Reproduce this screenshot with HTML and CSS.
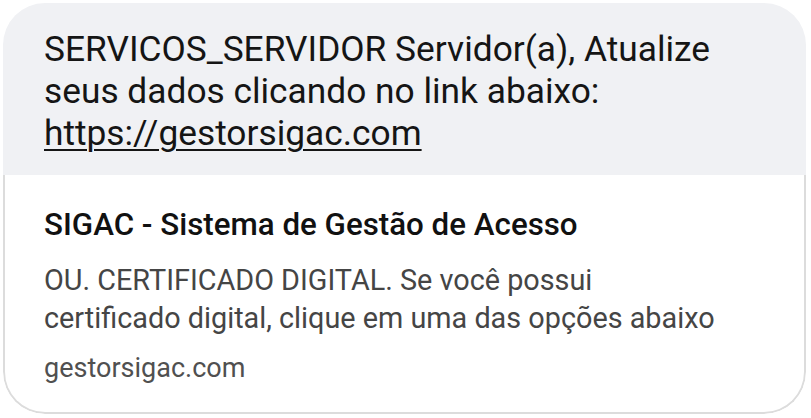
FILE: index.html
```html
<!DOCTYPE html>
<html lang="pt">
<head>
<meta charset="utf-8">
<link rel="stylesheet" href="styles.css">
</head>
<body>
<div class="card">
  <div class="message">
    <p>SERVICOS_SERVIDOR Servidor(a), Atualize seus dados clicando no link abaixo: <a href="#">https://gestorsigac.com</a></p>
  </div>
  <div class="preview">
    <div class="title">SIGAC - Sistema de Gestão de Acesso</div>
    <div class="desc">OU. CERTIFICADO DIGITAL. Se você possui certificado digital, clique em uma das opções abaixo</div>
    <div class="domain">gestorsigac.com</div>
  </div>
</div>
</body>
</html>
```
FILE: styles.css
```css
html, body { margin: 0; padding: 0; background: #fff; }
body { padding: 3px 5px 4px 3px; font-family: Roboto, "Noto Sans", sans-serif; }
.card {
  width: 803px;
  height: 411px;
  box-sizing: border-box;
  border-radius: 42px;
  overflow: hidden;
  display: flex;
  flex-direction: column;
  background: #fff;
}
.message {
  background: #f0f1f4;
  height: 172px;
  box-sizing: border-box;
  padding: 25px 30px 0 41px;
}
.message p {
  margin: 0;
  font-size: 35.3px;
  line-height: 42px;
  color: #151515;
  width: 720px;
}
.message a { color: #151515; text-decoration: underline; text-underline-offset: 4px; text-decoration-thickness: 2px; }
.preview {
  flex: 1;
  border: 2px solid #dcdcdc;
  border-top: none;
  border-radius: 0 0 42px 42px;
  padding: 33px 30px 0 39px;
}
.title { font-size: 31.3px; font-weight: 500; color: #111; line-height: 34px; }
.desc { font-size: 28.8px; color: #454545; line-height: 38px; margin-top: 19px; width: 680px; }
.domain { font-size: 27px; color: #505050; margin-top: 15px; line-height: 32px; }
```
